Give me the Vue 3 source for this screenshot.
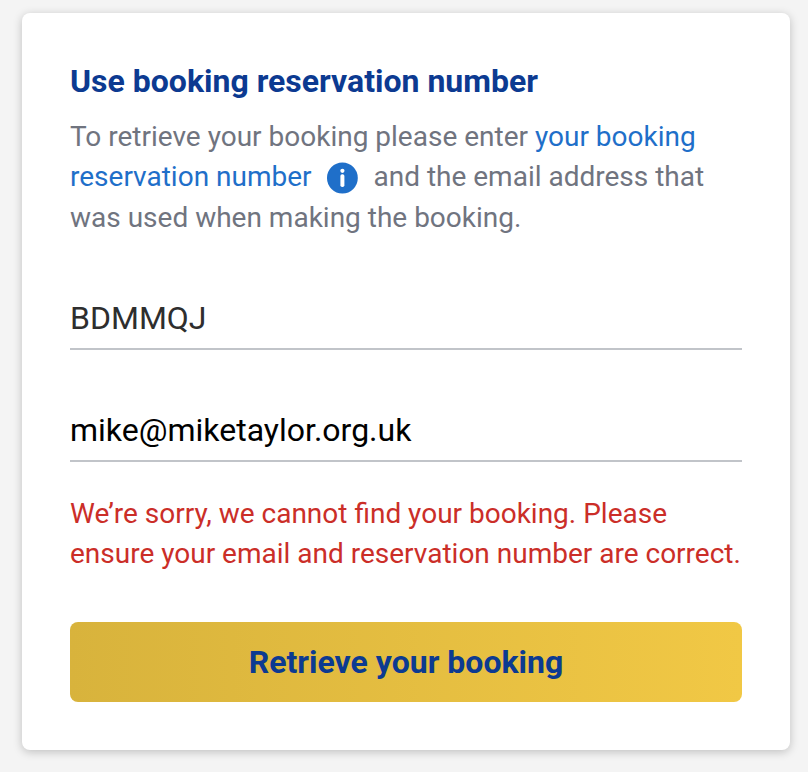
<script setup>
import { ref } from 'vue'

const reservation = ref('BDMMQJ')
const email = ref('mike@miketaylor.org.uk')
const error = ref('We’re sorry, we cannot find your booking. Please ensure your email and reservation number are correct.')
</script>

<template>
  <main class="page">
    <form class="card" @submit.prevent>
      <h1 class="title">Use booking reservation number</h1>
      <p class="intro">
        To retrieve your booking please enter
        <a href="#reservation" class="link">your booking reservation number</a> <svg class="info" viewBox="0 0 32 32" aria-hidden="true">
          <circle cx="15.4" cy="16" r="15.4" fill="#1f6fc9" />
          <circle cx="15.4" cy="8.8" r="2.1" fill="#fff" />
          <rect x="13.4" y="12.2" width="4" height="12.8" rx="1.8" fill="#fff" />
        </svg>
        and the email address that was used when making the booking.
      </p>
      <input id="reservation" v-model="reservation" class="field muted" type="text" aria-label="Reservation number" />
      <input id="email" v-model="email" class="field" type="email" aria-label="Email address" />
      <p class="error" role="alert">{{ error }}</p>
      <button class="submit" type="submit">Retrieve your booking</button>
    </form>
  </main>
</template>

<style>
body {
  background: #f4f4f4;
}
</style>

<style scoped>
.page {
  padding: 13px 18px 22px 22px;
  font-family: Roboto, 'Liberation Sans', sans-serif;
}
.card {
  display: flex;
  flex-direction: column;
  padding: 48px;
  background: #fff;
  border-radius: 8px;
  box-shadow: 0 2px 10px rgba(0, 0, 0, 0.22);
}
.title {
  margin: 0;
  font-size: 32px;
  line-height: 40px;
  font-weight: 700;
  color: #0c3a91;
}
.intro,
.error {
  margin: 0;
  font-size: 28px;
  line-height: 40px;
}
.intro {
  margin-top: 16px;
  color: #70747f;
}
.link {
  color: #1f6fc9;
  text-decoration: none;
}
.info {
  width: 32px;
  height: 32px;
  margin: 0 8px 4px;
  vertical-align: -12px;
}
.field {
  width: 100%;
  box-sizing: border-box;
  height: 64px;
  margin-top: 48px;
  padding: 2px 0 0;
  border: 0;
  border-bottom: 2px solid #c1c4c9;
  border-radius: 0;
  background: none;
  font: inherit;
  font-size: 32px;
  color: #000;
  outline: none;
}
.muted {
  color: #2e2e2e;
}
.error {
  margin-top: 32px;
  color: #cb2e28;
}
.submit {
  height: 80px;
  margin-top: 48px;
  border: 0;
  border-radius: 8px;
  background: linear-gradient(90deg, #d8b33c, #f1c845);
  font: inherit;
  font-size: 32px;
  font-weight: 700;
  color: #0c3a91;
  cursor: pointer;
}
</style>
